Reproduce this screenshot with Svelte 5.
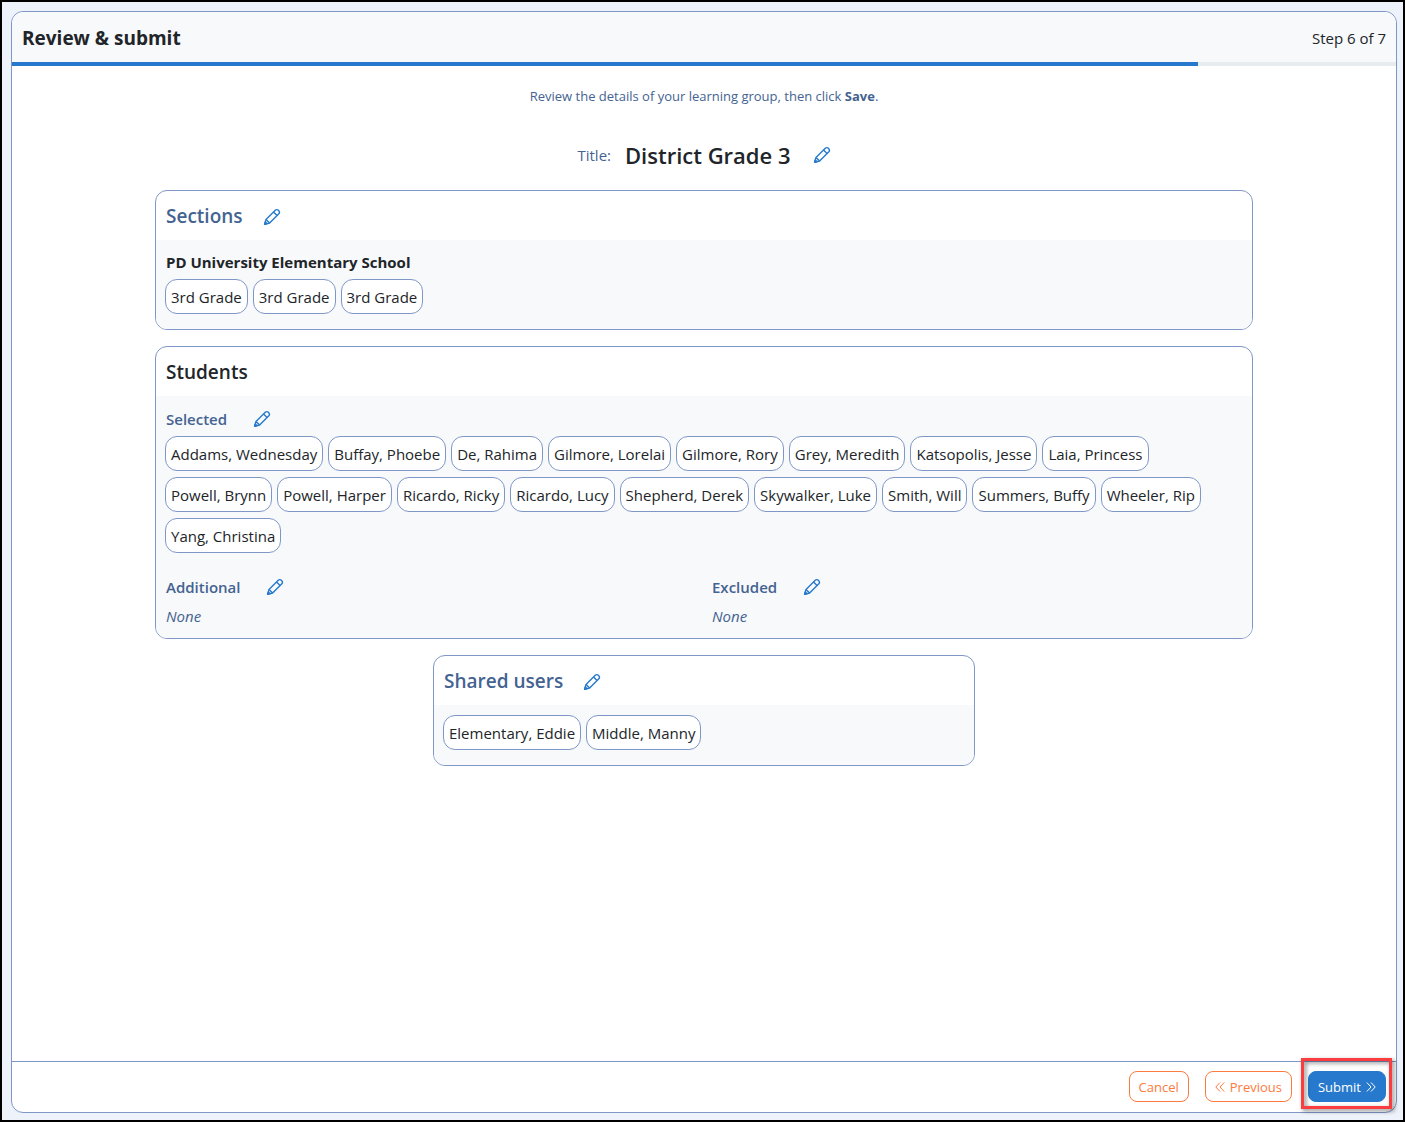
<script>
  // ===== WIZARD STATE =====
  let step = $state(6);
  const totalSteps = 7;

  // ===== GROUP DETAILS =====
  const group = {
    title: 'District Grade 3',
    school: 'PD University Elementary School',
    sections: ['3rd Grade', '3rd Grade', '3rd Grade'],
    selected: [
      'Addams, Wednesday',
      'Buffay, Phoebe',
      'De, Rahima',
      'Gilmore, Lorelai',
      'Gilmore, Rory',
      'Grey, Meredith',
      'Katsopolis, Jesse',
      'Laia, Princess',
      'Powell, Brynn',
      'Powell, Harper',
      'Ricardo, Ricky',
      'Ricardo, Lucy',
      'Shepherd, Derek',
      'Skywalker, Luke',
      'Smith, Will',
      'Summers, Buffy',
      'Wheeler, Rip',
      'Yang, Christina'
    ],
    additional: [],
    excluded: [],
    sharedUsers: ['Elementary, Eddie', 'Middle, Manny']
  };

  // Share of the progress bar that is filled in
  let progress = $derived((step / totalSteps) * 100);
</script>

{#snippet editButton(label)}
  <button type="button" class="edit" aria-label={`Edit ${label}`}>
    <svg viewBox="0 0 18 18" width="18" height="18" aria-hidden="true">
      <path d="M1.600 16.400 3 11.400 12 2.400a2.500 2.500 0 0 1 3.600 3.600L6.600 15z" />
      <path d="M10.500 3.900l3.600 3.600M3 11.400l3.600 3.600" />
      <path class="tip" d="M1.600 16.400l.7-2.500 1.800 1.800z" />
    </svg>
  </button>
{/snippet}

{#snippet chips(names)}
  {#if names.length}
    <ul class="chips">
      {#each names as name}
        <li class="chip">{name}</li>
      {/each}
    </ul>
  {:else}
    <p class="none">None</p>
  {/if}
{/snippet}

<div class="page">
  <div class="panel">
    <header>
      <h1>Review &amp; submit</h1>
      <span>Step {step} of {totalSteps}</span>
    </header>
    <div
      class="progress"
      role="progressbar"
      aria-label="Wizard progress"
      aria-valuemin="0"
      aria-valuemax={totalSteps}
      aria-valuenow={step}
    >
      <div class="bar" style="width: {progress}%"></div>
    </div>

    <main>
      <p class="intro">Review the details of your learning group, then click <strong>Save</strong>.</p>

      <div class="title-row">
        <span class="title-label">Title:</span>
        <h2>{group.title}</h2>
        {@render editButton('title')}
      </div>

      <div class="cards">
        <section class="card">
          <div class="card-head">
            <h3>Sections</h3>
            {@render editButton('sections')}
          </div>
          <div class="card-body">
            <h4 class="school">{group.school}</h4>
            {@render chips(group.sections)}
          </div>
        </section>

        <section class="card">
          <div class="card-head">
            <h3 class="dark">Students</h3>
          </div>
          <div class="card-body students">
            <div class="subhead">
              <h4>Selected</h4>
              {@render editButton('selected students')}
            </div>
            {@render chips(group.selected)}
            <div class="columns">
              <div>
                <div class="subhead">
                  <h4>Additional</h4>
                  {@render editButton('additional students')}
                </div>
                {@render chips(group.additional)}
              </div>
              <div>
                <div class="subhead">
                  <h4>Excluded</h4>
                  {@render editButton('excluded students')}
                </div>
                {@render chips(group.excluded)}
              </div>
            </div>
          </div>
        </section>

        <section class="card half">
          <div class="card-head">
            <h3>Shared users</h3>
            {@render editButton('shared users')}
          </div>
          <div class="card-body">
            {@render chips(group.sharedUsers)}
          </div>
        </section>
      </div>
    </main>

    <footer>
      <button type="button" class="btn">Cancel</button>
      <button type="button" class="btn" onclick={() => (step = Math.max(1, step - 1))}>
        <svg viewBox="0 0 10 10" width="10" height="10" aria-hidden="true">
          <path d="M5 .5.8 5 5 9.500M9.200.5 5 5l4.200 4.500" />
        </svg>
        Previous
      </button>
      <div class="highlight">
        <button type="submit" class="btn primary">
          Submit
          <svg viewBox="0 0 10 10" width="10" height="10" aria-hidden="true">
            <path d="M.8.5 5 5 .8 9.500M5 .5 9.200 5 5 9.500" />
          </svg>
        </button>
      </div>
    </footer>
  </div>
</div>

<style>
  :global(body) {
    margin: 0;
  }

  .page {
    --line: #7f97c6;
    --blue: #2779cd;
    --slate: #446391;
    --ink: #212529;
    --soft: #f8f9fb;
    --orange: #fc7b3e;

    display: flex;
    box-sizing: border-box;
    min-height: 100vh;
    padding: 9px 6px 7px 9px;
    border: 2px solid #000;
    background: #edf2fb;
    color: var(--ink);
    font-family: 'Segoe UI', 'Open Sans', 'Noto Sans', sans-serif;
    font-size: 15px;
    line-height: 24px;
  }

  h1,
  h2,
  h3,
  h4,
  p,
  ul {
    margin: 0;
    padding: 0;
  }

  .panel {
    display: flex;
    flex: 1;
    flex-direction: column;
    min-width: 0;
    border: 1px solid var(--line);
    border-radius: 12px;
    background: #fff;
  }

  header {
    display: flex;
    align-items: center;
    justify-content: space-between;
    padding: 11px 10px 9px;
    border-radius: 12px 12px 0 0;
    background: var(--soft);
  }

  h1 {
    font-size: 19px;
    font-weight: 700;
    line-height: 30px;
  }

  .progress {
    height: 4px;
    background: #e9ecef;
  }

  .bar {
    height: 100%;
    background: var(--blue);
  }

  main {
    flex: 1;
    padding: 20px 10px;
  }

  .intro {
    color: var(--slate);
    font-size: 13px;
    line-height: 20px;
    text-align: center;
  }

  .title-row {
    display: flex;
    align-items: center;
    justify-content: center;
    margin: 32px 0 18px;
  }

  .title-label {
    margin-right: 14px;
    color: var(--slate);
  }

  h2 {
    margin-right: 22px;
    font-size: 22px;
    font-weight: 600;
    line-height: 34px;
  }

  /* ===== CARDS ===== */
  .cards {
    display: flex;
    flex-direction: column;
    gap: 16px;
    width: 100%;
    max-width: 1098px;
    margin: 0 auto;
  }

  .card {
    overflow: hidden;
    border: 1px solid var(--line);
    border-radius: 12px;
  }

  .card.half {
    align-self: center;
    width: calc(50% - 9px);
  }

  .card-head {
    display: flex;
    align-items: center;
    gap: 20px;
    padding: 11px 10px 9px;
  }

  h3 {
    color: var(--slate);
    font-size: 19px;
    font-weight: 600;
    line-height: 29px;
  }

  h3.dark {
    color: var(--ink);
  }

  .card-body {
    padding: 10px 9px 15px;
    background: var(--soft);
  }

  .card-body.students {
    padding-bottom: 10px;
  }

  h4 {
    color: var(--slate);
    font-size: 15px;
    font-weight: 600;
  }

  h4.school {
    margin-bottom: 5px;
    padding-left: 1px;
    color: var(--ink);
    font-weight: 700;
  }

  .subhead {
    display: flex;
    align-items: center;
    gap: 26px;
    margin-bottom: 5px;
    padding: 1px 1px 0;
  }

  .chips {
    display: flex;
    flex-wrap: wrap;
    gap: 6px 5px;
    list-style: none;
  }

  .chip {
    padding: 6px 5px 5px;
    border: 1px solid var(--line);
    border-radius: 12px;
    background: #fff;
    line-height: 22px;
  }

  .columns {
    display: grid;
    grid-template-columns: 1fr 1fr;
    gap: 14px;
    margin-top: 21px;
  }

  .none {
    padding-left: 1px;
    color: var(--slate);
    font-style: italic;
  }

  .edit {
    display: flex;
    padding: 0;
    border: 0;
    background: none;
    cursor: pointer;
  }

  .edit svg {
    fill: none;
    stroke: var(--blue);
    stroke-linejoin: round;
    stroke-width: 1.4;
  }

  .edit .tip {
    fill: var(--blue);
  }

  /* ===== FOOTER ===== */
  footer {
    display: flex;
    align-items: center;
    justify-content: flex-end;
    gap: 16px;
    padding: 9px 10px 10px;
    border-top: 1px solid var(--line);
  }

  .btn {
    display: flex;
    align-items: center;
    gap: 5px;
    padding: 5px 9px 4px;
    border: 1px solid var(--orange);
    border-radius: 8px;
    background: #fff;
    color: var(--orange);
    font-family: inherit;
    font-size: 13px;
    line-height: 20px;
    cursor: pointer;
  }

  .btn.primary {
    border-color: var(--blue);
    background: var(--blue);
    color: #fff;
  }

  .btn svg {
    fill: none;
    stroke: currentColor;
    stroke-width: 1;
  }

  .highlight {
    position: relative;
  }

  .highlight::after {
    position: absolute;
    inset: -13px -6px -7px -7px;
    border: 3px solid #fb3d40;
    filter: drop-shadow(2px 2px 2px rgba(0, 0, 0, 0.5));
    content: '';
    pointer-events: none;
  }
</style>
